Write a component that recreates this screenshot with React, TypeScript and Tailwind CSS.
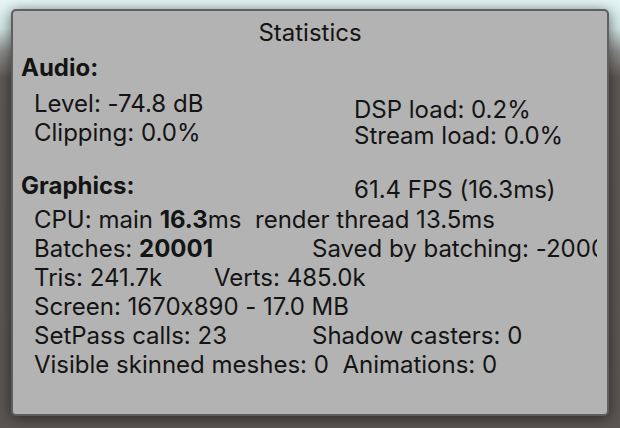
import React from "react";

const Line = ({ children, className = "" }: { children: React.ReactNode; className?: string }) => (
  <div className={`h-[29px] leading-[29px] whitespace-pre ${className}`}>{children}</div>
);

export default function App() {
  return (
    <div className="w-[620px] h-[428px] overflow-hidden bg-[linear-gradient(to_bottom,#e6f6f6_0px,#d2e6e6_28px,#8a8c8a_52px,#5d5955_78px,#5a5652_428px)] pt-[9px] pl-[11px] font-['Inter',sans-serif] text-[24px] [font-feature-settings:'calt'_0] text-[#141414]">
      <div className="w-[598px] h-[407px] rounded-[5px] border-2 border-[#5f5f5f] bg-[#b3b3b3] shadow-[0_2px_14px_rgba(0,0,0,0.55)] pt-[7px] overflow-hidden">
        <Line className="text-center">Statistics</Line>
        <Line className="mt-[6px] pl-[8px] font-bold">Audio:</Line>
        <div className="flex">
          <div className="w-[341px] pl-[21px] mt-[7px] shrink-0">
            <Line>Level: -74.8 dB</Line>
            <Line>Clipping: 0.0%</Line>
          </div>
          <div className="mt-[15px]">
            <div className="h-[26px] leading-[26px] whitespace-pre">DSP load: 0.2%</div>
            <div className="h-[26px] leading-[26px] whitespace-pre">Stream load: 0.0%</div>
          </div>
        </div>
        <div className="flex mt-[22px] h-[34px]">
          <Line className="w-[341px] pl-[8px] font-bold shrink-0">Graphics:</Line>
          <Line className="mt-[4px]">61.4 FPS (16.3ms)</Line>
        </div>
        <div className="pl-[21px] w-[584px] overflow-hidden">
          <Line>
            CPU: main <b>16.3</b>ms  render thread 13.5ms
          </Line>
          <div className="flex">
            <Line className="w-[278px] shrink-0">
              Batches: <b>20001</b>
            </Line>
            <Line>Saved by batching: -20000</Line>
          </div>
          <div className="flex">
            <Line className="w-[180px] shrink-0">Tris: 241.7k</Line>
            <Line>Verts: 485.0k</Line>
          </div>
          <Line>Screen: 1670x890 - 17.0 MB</Line>
          <div className="flex">
            <Line className="w-[278px] shrink-0">SetPass calls: 23</Line>
            <Line>Shadow casters: 0</Line>
          </div>
          <Line>Visible skinned meshes: 0  Animations: 0</Line>
        </div>
      </div>
    </div>
  );
}
